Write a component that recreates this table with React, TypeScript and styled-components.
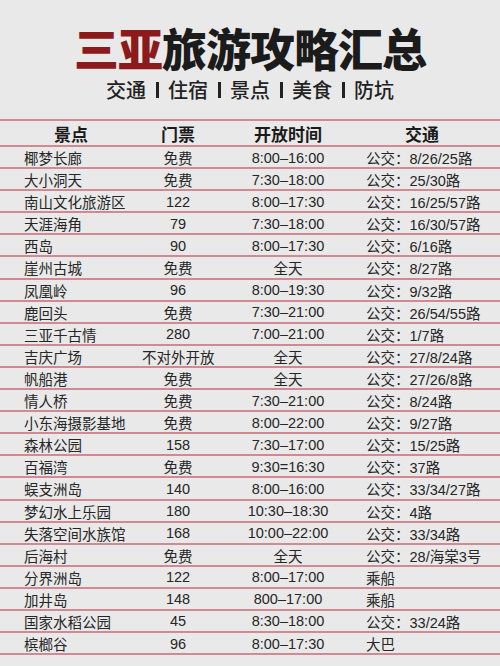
import styled, { createGlobalStyle } from 'styled-components'

const GlobalStyle = createGlobalStyle`
  html, body {
    margin: 0;
    padding: 0;
    background: #e9e9e9;
  }
  body {
    font-family: "Liberation Sans", "Noto Sans CJK SC", sans-serif;
    color: #222;
  }
`

const Page = styled.div`
  width: 500px;
  height: 666px;
  overflow: hidden;
  background: #e9e9e9;
`

const Header = styled.header`
  display: flex;
  flex-direction: column;
  align-items: center;
  padding-top: 22px;
  padding-bottom: 18px;
`

const Title = styled.h1`
  margin: 0;
  font-family: "Noto Sans CJK SC", sans-serif;
  font-size: 45px;
  line-height: 52px;
  font-weight: 900;
  color: #1b1b1b;
  letter-spacing: -1px;

  span {
    color: #8c1a1a;
  }
`

const Subtitle = styled.div`
  display: flex;
  align-items: center;
  margin-top: 5px;
  font-family: "Noto Sans CJK SC", sans-serif;
  font-size: 20px;
  line-height: 22px;
  font-weight: 500;
  color: #222;
`

const Bar = styled.span`
  display: inline-block;
  width: 3px;
  height: 16px;
  margin: 0 9px 0 10px;
  background: #222;
`

const Table = styled.div`
  border-top: 2px solid #d18a94;
`

const Row = styled.div<{ $head?: boolean }>`
  display: grid;
  grid-template-columns: 142px 72px 148px 1fr;
  align-items: center;
  height: ${({ $head }) => ($head ? '24px' : '20.1px')};
  border-bottom: 2px solid #d18a94;
  font-size: ${({ $head }) => ($head ? '17px' : '14.5px')};
  font-weight: ${({ $head }) => ($head ? 700 : 400)};
  color: ${({ $head }) => ($head ? '#1a1a1a' : '#262626')};
  white-space: nowrap;
`

const Cell = styled.div<{ $align?: 'left' | 'center'; $pad?: string }>`
  text-align: ${({ $align }) => $align ?? 'center'};
  padding: ${({ $pad }) => $pad ?? '0'};
`

const HeadText = styled.span`
  font-family: "Noto Sans CJK SC", sans-serif;
`

const spots = [
  ['椰梦长廊', '免费', '8:00–16:00', '公交：8/26/25路'],
  ['大小洞天', '免费', '7:30–18:00', '公交：25/30路'],
  ['南山文化旅游区', '122', '8:00–17:30', '公交：16/25/57路'],
  ['天涯海角', '79', '7:30–18:00', '公交：16/30/57路'],
  ['西岛', '90', '8:00–17:30', '公交：6/16路'],
  ['崖州古城', '免费', '全天', '公交：8/27路'],
  ['凤凰岭', '96', '8:00–19:30', '公交：9/32路'],
  ['鹿回头', '免费', '7:30–21:00', '公交：26/54/55路'],
  ['三亚千古情', '280', '7:00–21:00', '公交：1/7路'],
  ['吉庆广场', '不对外开放', '全天', '公交：27/8/24路'],
  ['帆船港', '免费', '全天', '公交：27/26/8路'],
  ['情人桥', '免费', '7:30–21:00', '公交：8/24路'],
  ['小东海摄影基地', '免费', '8:00–22:00', '公交：9/27路'],
  ['森林公园', '158', '7:30–17:00', '公交：15/25路'],
  ['百福湾', '免费', '9:30=16:30', '公交：37路'],
  ['蜈支洲岛', '140', '8:00–16:00', '公交：33/34/27路'],
  ['梦幻水上乐园', '180', '10:30–18:30', '公交：4路'],
  ['失落空间水族馆', '168', '10:00–22:00', '公交：33/34路'],
  ['后海村', '免费', '全天', '公交：28/海棠3号'],
  ['分界洲岛', '122', '8:00–17:00', '乘船'],
  ['加井岛', '148', '800–17:00', '乘船'],
  ['国家水稻公园', '45', '8:30–18:00', '公交：33/24路'],
  ['槟榔谷', '96', '8:00–17:30', '大巴'],
]

const tabs = ['交通', '住宿', '景点', '美食', '防坑']

export default function App() {
  return (
    <Page>
      <GlobalStyle />
      <Header>
        <Title>
          <span>三亚</span>旅游攻略汇总
        </Title>
        <Subtitle>
          {tabs.map((t, i) => (
            <span key={t}>
              {i > 0 && <Bar />}
              {t}
            </span>
          ))}
        </Subtitle>
      </Header>

      <Table>
        <Row $head>
          <Cell><HeadText>景点</HeadText></Cell>
          <Cell><HeadText>门票</HeadText></Cell>
          <Cell><HeadText>开放时间</HeadText></Cell>
          <Cell $pad="0 18px 0 0"><HeadText>交通</HeadText></Cell>
        </Row>
        {spots.map(([name, ticket, hours, traffic]) => (
          <Row key={name}>
            <Cell $align="left" $pad="0 0 0 24px">{name}</Cell>
            <Cell>{ticket}</Cell>
            <Cell>{hours}</Cell>
            <Cell $align="left" $pad="0 0 0 4px">{traffic}</Cell>
          </Row>
        ))}
      </Table>
    </Page>
  )
}
